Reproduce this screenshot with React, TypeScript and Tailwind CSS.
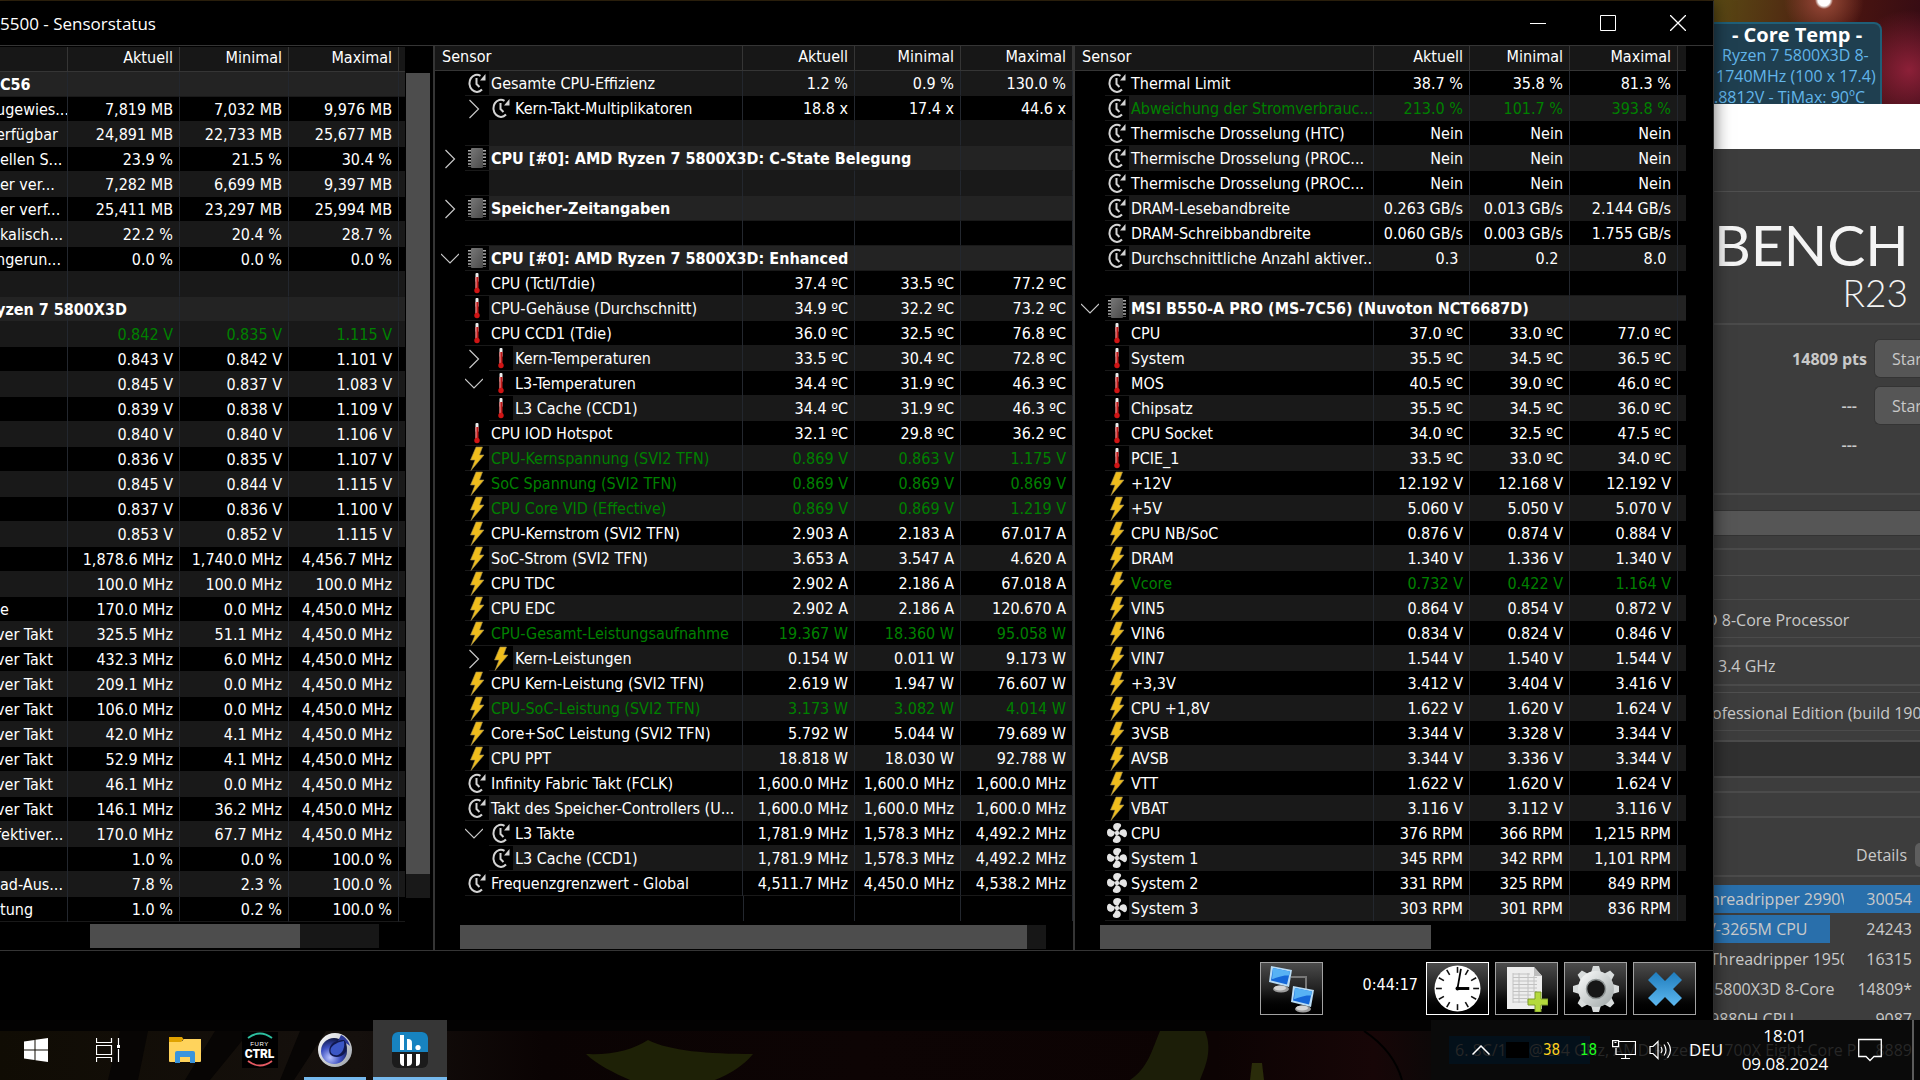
import React from 'react';

type IconName = 'clock' | 'chip' | 'temp' | 'bolt' | 'fan' | 'none';

type Row = {
  icon?: IconName;
  label: string;
  values?: [string, string, string];
  shade?: boolean;
  head?: boolean;
  green?: boolean;
  nested?: boolean;
  cut?: boolean;
  toggle?: 'open' | 'closed';
};

const memoryRows: Row[] = [
  { label: 'C56', head: true },
  { label: 'ugewies...', values: ['7,819 MB', '7,032 MB', '9,976 MB'], cut: true },
  { label: 'erfügbar', values: ['24,891 MB', '22,733 MB', '25,677 MB'], shade: true, cut: true },
  { label: 'ellen S...', values: ['23.9 %', '21.5 %', '30.4 %'] },
  { label: 'er ver...', values: ['7,282 MB', '6,699 MB', '9,397 MB'], shade: true },
  { label: 'er verf...', values: ['25,411 MB', '23,297 MB', '25,994 MB'] },
  { label: 'kalisch...', values: ['22.2 %', '20.4 %', '28.7 %'], shade: true },
  { label: 'ngerun...', values: ['0.0 %', '0.0 %', '0.0 %'], cut: true },
  { label: '', shade: true },
  { label: 'yzen 7 5800X3D', head: true, cut: true },
  { label: '', values: ['0.842 V', '0.835 V', '1.115 V'], shade: true, green: true },
  { label: '', values: ['0.843 V', '0.842 V', '1.101 V'] },
  { label: '', values: ['0.845 V', '0.837 V', '1.083 V'], shade: true },
  { label: '', values: ['0.839 V', '0.838 V', '1.109 V'] },
  { label: '', values: ['0.840 V', '0.840 V', '1.106 V'], shade: true },
  { label: '', values: ['0.836 V', '0.835 V', '1.107 V'] },
  { label: '', values: ['0.845 V', '0.844 V', '1.115 V'], shade: true },
  { label: '', values: ['0.837 V', '0.836 V', '1.100 V'] },
  { label: '', values: ['0.853 V', '0.852 V', '1.115 V'], shade: true },
  { label: '', values: ['1,878.6 MHz', '1,740.0 MHz', '4,456.7 MHz'] },
  { label: '', values: ['100.0 MHz', '100.0 MHz', '100.0 MHz'], shade: true },
  { label: 'e', values: ['170.0 MHz', '0.0 MHz', '4,450.0 MHz'] },
  { label: 'ver Takt', values: ['325.5 MHz', '51.1 MHz', '4,450.0 MHz'], shade: true, cut: true },
  { label: 'ver Takt', values: ['432.3 MHz', '6.0 MHz', '4,450.0 MHz'], cut: true },
  { label: 'ver Takt', values: ['209.1 MHz', '0.0 MHz', '4,450.0 MHz'], shade: true, cut: true },
  { label: 'ver Takt', values: ['106.0 MHz', '0.0 MHz', '4,450.0 MHz'], cut: true },
  { label: 'ver Takt', values: ['42.0 MHz', '4.1 MHz', '4,450.0 MHz'], shade: true, cut: true },
  { label: 'ver Takt', values: ['52.9 MHz', '4.1 MHz', '4,450.0 MHz'], cut: true },
  { label: 'ver Takt', values: ['46.1 MHz', '0.0 MHz', '4,450.0 MHz'], shade: true, cut: true },
  { label: 'ver Takt', values: ['146.1 MHz', '36.2 MHz', '4,450.0 MHz'], cut: true },
  { label: 'fektiver...', values: ['170.0 MHz', '67.7 MHz', '4,450.0 MHz'], shade: true, cut: true },
  { label: '', values: ['1.0 %', '0.0 %', '100.0 %'] },
  { label: 'ad-Aus...', values: ['7.8 %', '2.3 %', '100.0 %'], shade: true },
  { label: 'tung', values: ['1.0 %', '0.2 %', '100.0 %'] },
];

const cpuRows: Row[] = [
  { icon: 'clock', label: 'Gesamte CPU-Effizienz', values: ['1.2 %', '0.9 %', '130.0 %'], shade: true },
  { icon: 'clock', label: 'Kern-Takt-Multiplikatoren', values: ['18.8 x', '17.4 x', '44.6 x'], nested: true, toggle: 'closed' },
  { label: '', shade: true },
  { icon: 'chip', label: 'CPU [#0]: AMD Ryzen 7 5800X3D: C-State Belegung', head: true, toggle: 'closed' },
  { label: '', shade: true },
  { icon: 'chip', label: 'Speicher-Zeitangaben', head: true, toggle: 'closed' },
  { label: '' },
  { icon: 'chip', label: 'CPU [#0]: AMD Ryzen 7 5800X3D: Enhanced', head: true, toggle: 'open' },
  { icon: 'temp', label: 'CPU (Tctl/Tdie)', values: ['37.4 ºC', '33.5 ºC', '77.2 ºC'] },
  { icon: 'temp', label: 'CPU-Gehäuse (Durchschnitt)', values: ['34.9 ºC', '32.2 ºC', '73.2 ºC'], shade: true },
  { icon: 'temp', label: 'CPU CCD1 (Tdie)', values: ['36.0 ºC', '32.5 ºC', '76.8 ºC'] },
  { icon: 'temp', label: 'Kern-Temperaturen', values: ['33.5 ºC', '30.4 ºC', '72.8 ºC'], shade: true, nested: true, toggle: 'closed' },
  { icon: 'temp', label: 'L3-Temperaturen', values: ['34.4 ºC', '31.9 ºC', '46.3 ºC'], nested: true, toggle: 'open' },
  { icon: 'temp', label: 'L3 Cache (CCD1)', values: ['34.4 ºC', '31.9 ºC', '46.3 ºC'], shade: true, nested: true },
  { icon: 'temp', label: 'CPU IOD Hotspot', values: ['32.1 ºC', '29.8 ºC', '36.2 ºC'] },
  { icon: 'bolt', label: 'CPU-Kernspannung (SVI2 TFN)', values: ['0.869 V', '0.863 V', '1.175 V'], shade: true, green: true },
  { icon: 'bolt', label: 'SoC Spannung (SVI2 TFN)', values: ['0.869 V', '0.869 V', '0.869 V'], green: true },
  { icon: 'bolt', label: 'CPU Core VID (Effective)', values: ['0.869 V', '0.869 V', '1.219 V'], shade: true, green: true },
  { icon: 'bolt', label: 'CPU-Kernstrom (SVI2 TFN)', values: ['2.903 A', '2.183 A', '67.017 A'] },
  { icon: 'bolt', label: 'SoC-Strom (SVI2 TFN)', values: ['3.653 A', '3.547 A', '4.620 A'], shade: true },
  { icon: 'bolt', label: 'CPU TDC', values: ['2.902 A', '2.186 A', '67.018 A'] },
  { icon: 'bolt', label: 'CPU EDC', values: ['2.902 A', '2.186 A', '120.670 A'], shade: true },
  { icon: 'bolt', label: 'CPU-Gesamt-Leistungsaufnahme', values: ['19.367 W', '18.360 W', '95.058 W'], green: true },
  { icon: 'bolt', label: 'Kern-Leistungen', values: ['0.154 W', '0.011 W', '9.173 W'], shade: true, nested: true, toggle: 'closed' },
  { icon: 'bolt', label: 'CPU Kern-Leistung (SVI2 TFN)', values: ['2.619 W', '1.947 W', '76.607 W'] },
  { icon: 'bolt', label: 'CPU-SoC-Leistung (SVI2 TFN)', values: ['3.173 W', '3.082 W', '4.014 W'], shade: true, green: true },
  { icon: 'bolt', label: 'Core+SoC Leistung (SVI2 TFN)', values: ['5.792 W', '5.044 W', '79.689 W'] },
  { icon: 'bolt', label: 'CPU PPT', values: ['18.818 W', '18.030 W', '92.788 W'], shade: true },
  { icon: 'clock', label: 'Infinity Fabric Takt (FCLK)', values: ['1,600.0 MHz', '1,600.0 MHz', '1,600.0 MHz'] },
  { icon: 'clock', label: 'Takt des Speicher-Controllers (U...', values: ['1,600.0 MHz', '1,600.0 MHz', '1,600.0 MHz'], shade: true },
  { icon: 'clock', label: 'L3 Takte', values: ['1,781.9 MHz', '1,578.3 MHz', '4,492.2 MHz'], nested: true, toggle: 'open' },
  { icon: 'clock', label: 'L3 Cache (CCD1)', values: ['1,781.9 MHz', '1,578.3 MHz', '4,492.2 MHz'], shade: true, nested: true },
  { icon: 'clock', label: 'Frequenzgrenzwert - Global', values: ['4,511.7 MHz', '4,450.0 MHz', '4,538.2 MHz'] },
];

const boardRows: Row[] = [
  { icon: 'clock', label: 'Thermal Limit', values: ['38.7 %', '35.8 %', '81.3 %'] },
  { icon: 'clock', label: 'Abweichung der Stromverbrauc...', values: ['213.0 %', '101.7 %', '393.8 %'], shade: true, green: true },
  { icon: 'clock', label: 'Thermische Drosselung (HTC)', values: ['Nein', 'Nein', 'Nein'] },
  { icon: 'clock', label: 'Thermische Drosselung (PROC...', values: ['Nein', 'Nein', 'Nein'], shade: true },
  { icon: 'clock', label: 'Thermische Drosselung (PROC...', values: ['Nein', 'Nein', 'Nein'] },
  { icon: 'clock', label: 'DRAM-Lesebandbreite', values: ['0.263 GB/s', '0.013 GB/s', '2.144 GB/s'], shade: true },
  { icon: 'clock', label: 'DRAM-Schreibbandbreite', values: ['0.060 GB/s', '0.003 GB/s', '1.755 GB/s'] },
  { icon: 'clock', label: 'Durchschnittliche Anzahl aktiver...', values: ['0.3\u00a0', '0.2\u00a0', '8.0\u00a0'], shade: true },
  { label: '' },
  { icon: 'chip', label: 'MSI B550-A PRO (MS-7C56) (Nuvoton NCT6687D)', head: true, toggle: 'open' },
  { icon: 'temp', label: 'CPU', values: ['37.0 ºC', '33.0 ºC', '77.0 ºC'] },
  { icon: 'temp', label: 'System', values: ['35.5 ºC', '34.5 ºC', '36.5 ºC'], shade: true },
  { icon: 'temp', label: 'MOS', values: ['40.5 ºC', '39.0 ºC', '46.0 ºC'] },
  { icon: 'temp', label: 'Chipsatz', values: ['35.5 ºC', '34.5 ºC', '36.0 ºC'], shade: true },
  { icon: 'temp', label: 'CPU Socket', values: ['34.0 ºC', '32.5 ºC', '47.5 ºC'] },
  { icon: 'temp', label: 'PCIE_1', values: ['33.5 ºC', '33.0 ºC', '34.0 ºC'], shade: true },
  { icon: 'bolt', label: '+12V', values: ['12.192 V', '12.168 V', '12.192 V'] },
  { icon: 'bolt', label: '+5V', values: ['5.060 V', '5.050 V', '5.070 V'], shade: true },
  { icon: 'bolt', label: 'CPU NB/SoC', values: ['0.876 V', '0.874 V', '0.884 V'] },
  { icon: 'bolt', label: 'DRAM', values: ['1.340 V', '1.336 V', '1.340 V'], shade: true },
  { icon: 'bolt', label: 'Vcore', values: ['0.732 V', '0.422 V', '1.164 V'], green: true },
  { icon: 'bolt', label: 'VIN5', values: ['0.864 V', '0.854 V', '0.872 V'], shade: true },
  { icon: 'bolt', label: 'VIN6', values: ['0.834 V', '0.824 V', '0.846 V'] },
  { icon: 'bolt', label: 'VIN7', values: ['1.544 V', '1.540 V', '1.544 V'], shade: true },
  { icon: 'bolt', label: '+3,3V', values: ['3.412 V', '3.404 V', '3.416 V'] },
  { icon: 'bolt', label: 'CPU +1,8V', values: ['1.622 V', '1.620 V', '1.624 V'], shade: true },
  { icon: 'bolt', label: '3VSB', values: ['3.344 V', '3.328 V', '3.344 V'] },
  { icon: 'bolt', label: 'AVSB', values: ['3.344 V', '3.336 V', '3.344 V'], shade: true },
  { icon: 'bolt', label: 'VTT', values: ['1.622 V', '1.620 V', '1.624 V'] },
  { icon: 'bolt', label: 'VBAT', values: ['3.116 V', '3.112 V', '3.116 V'], shade: true },
  { icon: 'fan', label: 'CPU', values: ['376 RPM', '366 RPM', '1,215 RPM'] },
  { icon: 'fan', label: 'System 1', values: ['345 RPM', '342 RPM', '1,101 RPM'], shade: true },
  { icon: 'fan', label: 'System 2', values: ['331 RPM', '325 RPM', '849 RPM'] },
  { icon: 'fan', label: 'System 3', values: ['303 RPM', '301 RPM', '836 RPM'], shade: true },
];

const SensorIcon: React.FC<{ name: IconName }> = ({ name }) => {
  if (name === 'clock') {
    return (
      <svg width="18" height="20" viewBox="0 0 18 20" fill="none" stroke="#d4d4d4" strokeWidth="2">
        <path d="M12.500 2.800A7.400 8.600 0 1 0 14 16.500" />
        <path d="M17.500 1v6.500h-5.500z" fill="#d4d4d4" stroke="none" />
        <path d="M8.500 5v6l3 3" />
      </svg>
    );
  }
  if (name === 'chip') {
    return (
      <svg width="18" height="22" viewBox="0 0 18 22">
        <defs>
          <linearGradient id="chip" x1="0" y1="0" x2="1" y2="1">
            <stop offset="0" stopColor="#777" />
            <stop offset="1" stopColor="#4a4a4a" />
          </linearGradient>
        </defs>
        <path d="M1.500 3v17M16.500 3v17" stroke="#aaa" strokeWidth="3" strokeDasharray="1.5 1.8" />
        <rect x="3" y="1" width="12" height="20" rx="1" fill="url(#chip)" />
      </svg>
    );
  }
  if (name === 'temp') {
    return (
      <svg width="8" height="22" viewBox="0 0 8 22">
        <rect x="2.500" y="1" width="3" height="9" rx="1" fill="#eee" />
        <rect x="2.500" y="5" width="3" height="13" fill="#c31a1a" />
        <rect x="2.500" y="5" width="1" height="12" fill="#e8a0a0" />
        <circle cx="4" cy="18.500" r="2.700" fill="#d01414" />
      </svg>
    );
  }
  if (name === 'bolt') {
    return (
      <svg width="18" height="25" viewBox="0 0 18 25">
        <path d="M8 1h6.500L11.500 9H16L3 24.500 7 14H2.500z" fill="#efbd1c" stroke="#9a8a50" strokeWidth=".6" />
      </svg>
    );
  }
  if (name === 'fan') {
    return (
      <svg width="22" height="22" viewBox="0 0 22 22" fill="#e4e4e4">
        {[0, 90, 180, 270].map((a) => (
          <path key={a} d="M10 8.500C6 7 6 1 11.500 1c4 0 4.500 3 2.500 4.500L12 9z" transform={`rotate(${a} 11 11)`} />
        ))}
        <circle cx="11" cy="11" r="2.200" />
      </svg>
    );
  }
  return null;
};

const Toggle: React.FC<{ state: 'open' | 'closed' }> = ({ state }) => (
  <button className="flex h-5 w-[18px] items-center justify-center" aria-label={state}>
    <svg width="18" height="20" viewBox="0 0 18 20" fill="none" stroke="#c8c8c8" strokeWidth="1.2">
      <path d={state === 'open' ? 'M0 5l9 9 9-9' : 'M4.500 1l9 9-9 9'} />
    </svg>
  </button>
);

const rowBg = (r: Row) => (r.head ? 'bg-[#232323]' : r.shade ? 'bg-[#191919]' : 'bg-black');

type TableProps = {
  rows: Row[];
  cols: React.ReactNode;
  tree?: boolean;
  tail?: boolean;
};

const SensorTable: React.FC<TableProps> = ({ rows, cols, tree, tail }) => (
  <table className="w-full table-fixed border-separate border-spacing-0 text-white">
    {cols}
    <thead>
      <tr className="h-[25px] bg-[#171717]">
        <th className="border-r border-b border-[#353535] p-0 pt-px pb-[3px] pl-[7px] text-left leading-5 font-normal">{tree ? 'Sensor' : ''}</th>
        {['Aktuell', 'Minimal', 'Maximal'].map((h) => (
          <th key={h} className="border-r border-b border-[#353535] p-0 pt-px pr-1.5 pb-[3px] text-right leading-5 font-normal">{h}</th>
        ))}
        {tail && <th className="border-b border-[#353535] p-0"></th>}
      </tr>
    </thead>
    <tbody>
      {rows.map((r, i) => (
        <tr key={i} className={`h-[25px] ${r.green ? 'text-[#008000]' : ''}`}>
          <td className="border-r border-[#23272e] p-0">
            <div className="flex h-[25px] whitespace-nowrap">
              {tree && (
                <>
                  <div className={`flex shrink-0 items-center justify-end pr-1.5 ${r.nested ? 'w-[54px]' : 'w-[30px]'}`}>
                    {r.toggle && <Toggle state={r.toggle} />}
                  </div>
                  <div className="flex w-6 shrink-0 items-center justify-center border-b border-[#191919]">
                    <SensorIcon name={r.icon ?? 'none'} />
                  </div>
                </>
              )}
              <div
                className={`min-w-0 flex-1 border-b border-[#191919] pt-0.5 leading-[22px] ${tree ? 'pl-0.5' : ''} ${
                  r.cut ? '-indent-1' : ''
                } ${rowBg(r)} ${r.head ? 'font-bold' : 'overflow-hidden'}`}
              >
                {r.label}
              </div>
            </div>
          </td>
          {[0, 1, 2].map((c) => (
            <td
              key={c}
              className={`border-r border-b border-r-[#23272e] border-b-[#191919] p-0 pt-0.5 pr-1.5 text-right leading-[22px] whitespace-nowrap ${rowBg(r)}`}
            >
              {r.values?.[c]}
            </td>
          ))}
          {tail && <td className={`border-b border-[#191919] p-0 ${rowBg(r)}`}></td>}
        </tr>
      ))}
    </tbody>
  </table>
);

const ToolButton: React.FC<{ label: string; active?: boolean; children: React.ReactNode }> = ({ label, active, children }) => (
  <button
    aria-label={label}
    className={`flex h-[53px] w-[63px] items-center justify-center border bg-linear-to-b from-[#4c4c4c] via-[#222] to-black ${
      active ? 'border-white' : 'border-[#a2a2a2]'
    }`}
  >
    {children}
  </button>
);

const Monitor: React.FC<{ x: number; y: number }> = ({ x, y }) => (
  <g transform={`translate(${x} ${y})`}>
    <ellipse cx="12" cy="23" rx="8" ry="3.500" fill="#9b9b9b" />
    <ellipse cx="11" cy="22" rx="6" ry="2.500" fill="#d5d5d5" />
    <path d="M2 0l21 4-3 17L0 16z" fill="#b9dcf5" />
    <path d="M4 2l17 3.500-3 13L2 14.500z" fill="#1467d8" />
    <path d="M4 2l17 3.500-1 4C12 9 8 12 3 13z" fill="#57b2f4" />
  </g>
);

const Toolbar = () => (
  <div className="flex h-20 items-start justify-end gap-1.5 pt-[11px] pr-[17px]">
    <ToolButton label="Netzwerk">
      <svg width="50" height="48" viewBox="0 0 50 48">
        <path d="M24 12h15v12" fill="none" stroke="#777" strokeWidth="2" />
        <Monitor x={2} y={1} />
        <Monitor x={24} y={21} />
      </svg>
    </ToolButton>
    <span className="mr-0.5 ml-8 w-[57px] pt-[11px] text-right leading-6 text-white">0:44:17</span>
    <ToolButton label="Uhr" active>
      <svg width="47" height="47" viewBox="0 0 48 48">
        <circle cx="24" cy="24" r="23.500" fill="#fff" />
        {[0, 30, 60, 90, 120, 150, 180, 210, 240, 270, 300, 330].map((a) => (
          <path key={a} d="M24 2v6" stroke="#111" strokeWidth="1.600" transform={`rotate(${a} 24 24)`} />
        ))}
        <path d="M24 24L27.500 4" stroke="#000" strokeWidth="1.800" />
        <path d="M24 24h12" stroke="#000" strokeWidth="3" />
        <circle cx="24" cy="24" r="2" />
      </svg>
    </ToolButton>
    <ToolButton label="Protokoll">
      <svg width="42" height="46" viewBox="0 0 42 46">
        <path d="M1 1h27l8 9v33H1z" fill="#ededed" />
        <path d="M28 1l8 9h-8z" fill="#bdbdbd" />
        <path d="M7 8h17M7 11.500h24M7 15h24M7 18.500h24M7 22h24M7 25.500h24M7 29h18M7 32.500h15M7 36h15M7 7v30M13 7v30M22 7v30M28 10v16" stroke="#c2c2c2" />
        <path d="M29 26h6v7h7v6h-7v7h-6v-7h-7v-6h7z" fill="#b4d93c" stroke="#7d9a2b" />
      </svg>
    </ToolButton>
    <ToolButton label="Einstellungen">
      <svg width="46" height="46" viewBox="0 0 46 46">
        <defs>
          <linearGradient id="gear" x1="0" y1="0" x2="1" y2="1">
            <stop offset="0" stopColor="#f2f4f4" />
            <stop offset="1" stopColor="#a9b0b0" />
          </linearGradient>
        </defs>
        {[0, 45, 90, 135, 180, 225, 270, 315].map((a) => (
          <path key={a} d="M17 10l3-10h6l3 10z" fill="#d8dcdc" transform={`rotate(${a} 23 23)`} />
        ))}
        <circle cx="23" cy="23" r="13.500" fill="none" stroke="url(#gear)" strokeWidth="9" />
        <circle cx="23" cy="23" r="9.500" fill="#161616" stroke="#8f9595" strokeWidth="1.500" />
      </svg>
    </ToolButton>
    <ToolButton label="Beenden">
      <svg width="34" height="34" viewBox="0 0 34 34">
        <defs>
          <linearGradient id="cross" x1="0" y1="0" x2="0" y2="1">
            <stop offset="0" stopColor="#1f7cbd" />
            <stop offset="1" stopColor="#5db8f0" />
          </linearGradient>
        </defs>
        <path d="M8 0l9 9 9-9 8 8-9 9 9 9-8 8-9-9-9 9-8-8 9-9-9-9z" fill="url(#cross)" />
      </svg>
    </ToolButton>
  </div>
);

const captionButton = 'flex h-11 w-[70px] items-center justify-center';

const SensorWindow = () => (
  <div className="relative z-10 mt-px flex min-w-0 flex-1 flex-col self-start overflow-hidden border-r border-[#2e2e2e] bg-black shadow-[0_0_16px_rgba(0,0,0,0.6)]">
    <div className="flex h-11 items-center justify-between text-white">
      <h1 className="pt-0.5 font-['Open_Sans',sans-serif] text-[17px] leading-6">5500 - Sensorstatus</h1>
      <div className="flex">
        <button className={captionButton} aria-label="Minimieren">
          <svg width="16" height="16" viewBox="0 0 16 16" stroke="#fff"><path d="M0 8.500h16" /></svg>
        </button>
        <button className={captionButton} aria-label="Maximieren">
          <svg width="16" height="16" viewBox="0 0 16 16" fill="none" stroke="#fff"><path d="M.5.5h15v15H.5z" /></svg>
        </button>
        <button className={captionButton} aria-label="Schließen">
          <svg width="16" height="16" viewBox="0 0 16 16" stroke="#fff" strokeWidth="1.300"><path d="M0 0l16 16M16 0L0 16" /></svg>
        </button>
      </div>
    </div>

    <div className="flex border-y border-[#353535]">
      {/* Memory + core clocks, scrolled to the right */}
      <section className="flex w-[435px] shrink-0 flex-col border-r-2 border-[#353535] pt-px">
        <div className="flex">
          <div className="w-[405px] shrink-0">
            <SensorTable
              rows={memoryRows}
              tail
              cols={
                <colgroup>
                  <col />
                  <col className="w-28" />
                  <col className="w-[109px]" />
                  <col className="w-[110px]" />
                  <col className="w-1.5" />
                </colgroup>
              }
            />
          </div>
          <div className="mt-[26px] mb-6 ml-px flex w-6 flex-col bg-[#191919] pb-6">
            <div className="flex-1 bg-[#4d4d4d]"></div>
          </div>
        </div>
        <div className="mt-auto mb-0.5 ml-[90px] h-6 w-[289px] bg-[#171717]">
          <div className="h-full w-[210px] bg-[#4d4d4d]"></div>
        </div>
      </section>

      <section className="flex min-w-0 flex-1 flex-col border-r-2 border-[#353535]">
        <SensorTable
          rows={cpuRows}
          tree
          cols={
            <colgroup>
              <col />
              <col className="w-28" />
              <col className="w-[106px]" />
              <col className="w-28" />
            </colgroup>
          }
        />
        <div className="flex flex-1 justify-end">
          <div className="w-28 border-x border-[#23272e]"></div>
          <div className="w-[106px] border-r border-[#23272e]"></div>
          <div className="w-28 border-r border-[#23272e]"></div>
        </div>
        <div className="mt-1 mr-[27px] mb-px ml-[25px] h-6 bg-[#171717]">
          <div className="h-full w-[567px] bg-[#4d4d4d]"></div>
        </div>
      </section>

      <section className="flex w-[638px] shrink-0 flex-col">
        <div className="pr-[27px]">
          <SensorTable
            rows={boardRows}
            tree
            tail
            cols={
              <colgroup>
                <col />
                <col className="w-24" />
                <col className="w-[100px]" />
                <col className="w-[108px]" />
                <col className="w-2" />
              </colgroup>
            }
          />
        </div>
        <div className="mt-1 mb-px ml-[25px] h-6 w-[331px] bg-[#4d4d4d]"></div>
      </section>
    </div>

    <Toolbar />
  </div>
);

const ranking = [
  { name: 'hreadripper 2990WX', score: '30054', bar: 'bg-[#296fab]' },
  { name: '/-3265M CPU', score: '24243', bar: 'bg-[linear-gradient(90deg,#296fab_116px,transparent_116px)]' },
  { name: 'Threadripper 1950X', score: '16315', bar: '' },
  { name: ' 5800X3D 8-Core', score: '14809*', bar: '' },
  { name: '9880H CPU', score: '9087', bar: '' },
];

const Desktop = () => (
  <aside className="flex w-[206px] shrink-0 flex-col overflow-hidden font-['Open_Sans',sans-serif] text-[16px] leading-6 whitespace-nowrap text-[#c9c9c9]">
    <div className="h-[104px] overflow-hidden bg-[radial-gradient(circle_at_110px_0,#fff_0_6px,#8a4030_9px,transparent_40px),radial-gradient(circle_at_195px_70px,#8c2038,transparent_60px),linear-gradient(100deg,#5a4a14,#4a1510_60%,#330a14)] pt-[22px]">
      <div className="h-[90px] w-[168px] rounded-tr-lg border-2 border-l-0 border-[#1f5f78] bg-[#1f3f50] text-[#62b5ea]">
        <div className="text-center font-['Open_Sans',sans-serif] text-[20px] leading-[21px] font-bold text-white">- Core Temp -</div>
        <div className="pl-2 leading-[21px]">Ryzen 7 5800X3D 8-</div>
        <div className="pl-0.5 leading-[21px]">1740MHz (100 x 17.4)</div>
        <div className="leading-[21px]">.8812V - TjMax: 90ºC</div>
      </div>
    </div>
    <div className="h-[45px] bg-white"></div>

    <div className="flex flex-1 flex-col bg-[#3d3d3d]">
      <div className="h-[43px] border-b border-[#505050]"></div>
      <div className="h-[133px] border-b-2 border-[#4b4b4b] pt-5 pr-3 text-right font-['Lato',sans-serif] text-[#f4f4f4]">
        <div className="text-[57px] leading-[64px]">BENCH</div>
        <div className="text-[37px] leading-[34px] font-light">R23</div>
      </div>
      <div className="flex h-[170px] flex-col gap-2 border-b-2 border-[#4b4b4b] pt-3.5">
        <div className="flex items-center justify-end gap-[7px]">
          <span className="font-bold">14809 pts</span>
          <button className="h-[39px] w-[46px] overflow-hidden rounded-l-md border border-r-0 border-[#343434] bg-[#565656] pl-[17px] text-left">Start</button>
        </div>
        <div className="flex items-center justify-end gap-[17px]">
          <span className="font-semibold">---</span>
          <button className="h-[39px] w-[46px] overflow-hidden rounded-l-md border border-r-0 border-[#343434] bg-[#565656] pl-[17px] text-left">Start</button>
        </div>
        <div className="pr-[63px] text-right font-semibold">---</div>
      </div>
      <div className="h-[55px] border-b-2 border-[#4b4b4b] pt-[15px]">
        <div className="h-[26px] border-y border-[#333] bg-[#565656]"></div>
      </div>
      <div className="h-[26px] border-b border-[#505050]"></div>
      <div className="h-6 border-b border-[#4b4b4b]"></div>
      <div className="h-[38px] border-b border-[#4b4b4b] pt-2">
        <div className="-ml-2">D 8-Core Processor</div>
      </div>
      <div className="h-[9px] border-b-2 border-[#4b4b4b]"></div>
      <div className="h-[39px] border-b-2 border-[#4b4b4b] pt-[7px] pl-1">3.4 GHz</div>
      <div className="h-[7px] border-b border-[#505050]"></div>
      <div className="h-[38px] border-b border-[#4b4b4b] pt-2">
        <div className="-ml-0.5">ofessional Edition (build 19045)</div>
      </div>
      <div className="h-[11px] border-b-2 border-[#4b4b4b]"></div>
      <div className="h-9 border-b-2 border-[#4b4b4b] bg-[#303030]"></div>
      <div className="h-[15px] border-b-2 border-[#4b4b4b]"></div>
      <div className="h-[25px] border-b-2 border-[#4b4b4b]"></div>
      <div className="flex h-[59px] items-center justify-end gap-2 border-b-2 border-[#4b4b4b] pt-4">
        <label htmlFor="details">Details</label>
        <input id="details" type="checkbox" className="h-6 w-[5px] appearance-none rounded-l-md bg-[#5e5e5e]" />
      </div>
      <table className="mt-2 w-full table-fixed border-separate border-spacing-0">
        <tbody>
          {ranking.map((r) => (
            <tr key={r.name} className={`h-[30px] ${r.bar}`}>
              <td className="w-[130px] overflow-hidden border-b-2 border-[#3d3d3d] p-0">
                <span className="-ml-1 whitespace-pre">{r.name}</span>
              </td>
              <td className="border-b-2 border-[#3d3d3d] p-0 pr-2 text-right">{r.score}</td>
            </tr>
          ))}
        </tbody>
      </table>
    </div>
  </aside>
);

const TaskbarBackdrop = () => (
  <div className="absolute inset-0 -z-10 flex items-end bg-[#030202]">
    <div className="h-[49px] flex-1 bg-[linear-gradient(90deg,#100c04,#15100d_25%,#0a0303_38%,#0d0404_60%,#0c0303_85%,#170607_96%,#0d0808)]">
      <svg width="100%" height="49" className="block">
        <path d="M586 23c28 1 46-4 62-14 22 11 60 14 105 14-8 10-22 20-38 26h-85c-16-7-34-16-44-26z" fill="#1e2106" />
        <path d="M1160 0h45c8 20 0 36-5 49h-70c18-12 22-30 30-49z" fill="#1c1e08" />
        <path d="M1252 32h10l2 17h-14z" fill="#2a2c0a" />
        <path d="M215 0l-30 49h25l40-49zM300 0l-20 49h14l32-49zM120 0l-12 49h30l10-49z" fill="#070504" />
        <path d="M1364 0c18 12 32 28 38 49" stroke="#000" strokeWidth="2" fill="none" />
      </svg>
    </div>
    <div className="flex h-full w-[489px] items-center bg-[#0a0a0a] pl-[18px] font-['Open_Sans',sans-serif] text-[16px] whitespace-nowrap text-[#272727]">
      <div className="flex h-7 w-[141px] items-center bg-[#03101a] pl-1.5">6. 8C/16T @ 3.4 GHz, AMD Ryzen 7 1700X Eight-Core P</div>
      <span className="ml-auto pr-2">8889</span>
    </div>
  </div>
);

const Taskbar = () => (
  <footer className="absolute inset-x-0 bottom-0 isolate z-20 flex h-[60px] justify-between text-white">
    <TaskbarBackdrop />
    <div className="flex">
      <button className="flex w-[72px] items-center justify-center" aria-label="Start">
        <svg width="24" height="24" viewBox="0 0 24 24" fill="#fff">
          <path d="M0 3.400l10.500-1.500v9.600H0zM11.500 1.700L24 0v11.500H11.500zM0 12.500h10.500v9.600L0 20.600zM11.500 12.500H24V24l-12.500-1.700z" />
        </svg>
      </button>
      <button className="flex w-[76px] items-center justify-center pr-1" aria-label="Aufgabenansicht">
        <svg width="24" height="24" viewBox="0 0 24 24" fill="none" stroke="#fff" strokeWidth="1.200">
          <path d="M.5 0v4.500h15V0M.5 7.500h15v9H.5zM.5 24v-4.500h15V24M22.500 0v7M22.500 11v13" />
          <path d="M21 7h3v3h-3z" fill="#fff" stroke="none" />
        </svg>
      </button>
      <button className="flex w-[74px] items-center justify-center" aria-label="Explorer">
        <svg width="32" height="28" viewBox="0 0 32 28">
          <path d="M0 1h13l2 3h-2v3H0z" fill="#e0a200" />
          <path d="M0 6h12l3-3h17v22a1 1 0 0 1-1 1H1a1 1 0 0 1-1-1z" fill="#ffd35c" />
          <path d="M6 27V17a2 2 0 0 1 2-2h16a2 2 0 0 1 2 2v10h-5v-6H11v6z" fill="#3a94dd" />
        </svg>
      </button>
      <button className="flex w-[75px] items-center justify-center" aria-label="Fury CTRL">
        <div className="relative flex size-9 flex-col items-center justify-center bg-black">
          <svg width="36" height="36" viewBox="0 0 36 36" fill="none" strokeWidth="1.800" className="absolute inset-0">
            <path d="M6 6q12-9 24 0" stroke="#2dbf9f" />
            <path d="M6 29q12 9 24 0" stroke="#e65a62" />
          </svg>
          <span className="font-['Liberation_Sans',sans-serif] text-[6px] leading-[7px] tracking-widest">FURY</span>
          <span className="font-['Roboto',sans-serif] text-[12px] leading-3 font-black">CTRL</span>
        </div>
      </button>
      <button className="relative flex w-[76px] items-center justify-center" aria-label="Cinema 4D">
        <svg width="34" height="34" viewBox="0 0 34 34">
          <defs>
            <linearGradient id="c4dRing" x1="0" y1="0" x2="1" y2="1">
              <stop offset="0" stopColor="#fff" />
              <stop offset="1" stopColor="#9aa0a8" />
            </linearGradient>
            <radialGradient id="c4dCore" cx=".35" cy=".75" r=".8">
              <stop offset="0" stopColor="#b9c4ff" />
              <stop offset=".5" stopColor="#3c4fc0" />
              <stop offset="1" stopColor="#0a1136" />
            </radialGradient>
          </defs>
          <circle cx="17" cy="17" r="17" fill="url(#c4dRing)" />
          <circle cx="16" cy="18" r="13" fill="url(#c4dCore)" />
          <path d="M23 2c4 2 8 6 9 11-3-3-8-5-12-5z" fill="#2c3a9a" />
          <path d="M12 14c2-5 8-7 14-7 3 3 4 9 1 13-4 5-12 5-15 1-1-2-1-5 0-7z" fill="#10184e" />
          <path d="M13 15c3-4 7-6 13-7 1 6-1 12-6 14-5 1-9-2-7-7z" fill="#3b57c6" />
        </svg>
        <span className="absolute inset-x-[7px] bottom-0 h-[3px] bg-[#76b9ed]"></span>
      </button>
      <button className="relative flex w-[74px] items-center justify-center bg-[#363636]" aria-label="HWiNFO">
        <svg width="36" height="36" viewBox="0 0 36 36">
          <rect width="36" height="36" rx="6" fill="#1b1b1b" />
          <path d="M0 20V6a6 6 0 0 1 6-6h24a6 6 0 0 1 6 6v14z" fill="#1783c0" />
          <path d="M8 3h4v15H8zM15 7c5 0 5 2 5 5v6h-5zM8 22h4v12c-3 0-4-2-4-4zM15 22h5v8c0 3-2 4-5 4zM24 22h4v8c0 3-2 4-4 4z" fill="#fff" />
          <circle cx="26" cy="15.500" r="2.600" fill="#fff" />
        </svg>
        <span className="absolute inset-x-0 bottom-0 h-[3px] bg-[#76b9ed]"></span>
      </button>
    </div>

    <div className="flex items-center font-['Open_Sans',sans-serif] text-[17px] leading-7">
      <button className="mr-4 flex w-[18px] justify-center" aria-label="Ausgeblendete Symbole">
        <svg width="18" height="10" viewBox="0 0 18 10" fill="none" stroke="#fff" strokeWidth="1.500"><path d="M.5 9.500L9 1l8.500 8.500" /></svg>
      </button>
      <span className="mr-[14px] h-4 w-[23px] bg-black"></span>
      <span className="mr-[18px] w-[19px] font-['DejaVu_Sans_Condensed','DejaVu_Sans',sans-serif] text-[15px] text-[#ffd21e]">38</span>
      <span className="mr-[13px] w-[19px] font-['DejaVu_Sans_Condensed','DejaVu_Sans',sans-serif] text-[15px] text-[#1fff1f]">18</span>
      <button className="mr-[13px]" aria-label="Netzwerkstatus">
        <svg width="24" height="20" viewBox="0 0 24 20" fill="none" stroke="#fff" strokeWidth="1.200">
          <path d="M6 1.500h17.500v13H4V8M9 18.500h9M13.500 14.500v4M.6.6h6v6h-6zM2.500 2.500h2" />
        </svg>
      </button>
      <button className="mr-4" aria-label="Lautstärke">
        <svg width="24" height="20" viewBox="0 0 24 20" fill="none" stroke="#fff" strokeWidth="1.200">
          <path d="M1 6.500h3L9 1.500v17l-5-5H1zM12 7q2 3 0 6M15 4.500q4 5.500 0 11M18.500 2q6 8 0 16" />
        </svg>
      </button>
      <span className="w-[51px]">DEU</span>
      <div className="w-[90px] text-center">
        <div>18:01</div>
        <div>09.08.2024</div>
      </div>
      <button className="mr-[30px] ml-7" aria-label="Mitteilungen">
        <svg width="24" height="24" viewBox="0 0 24 24" fill="none" stroke="#fff" strokeWidth="1.300">
          <path d="M.7 1.500h22.600v17H16l-4 4-4-4H.7z" />
        </svg>
      </button>
      <span className="mr-1.5 h-full w-0.5 bg-[#5c5c5c]"></span>
    </div>
  </footer>
);

export default function App() {
  return (
    <main className="relative flex min-h-screen overflow-hidden bg-[#3a2a10] font-['DejaVu_Sans_Condensed','DejaVu_Sans',sans-serif] text-[16px]">
      <SensorWindow />
      <Desktop />
      <Taskbar />
    </main>
  );
}
